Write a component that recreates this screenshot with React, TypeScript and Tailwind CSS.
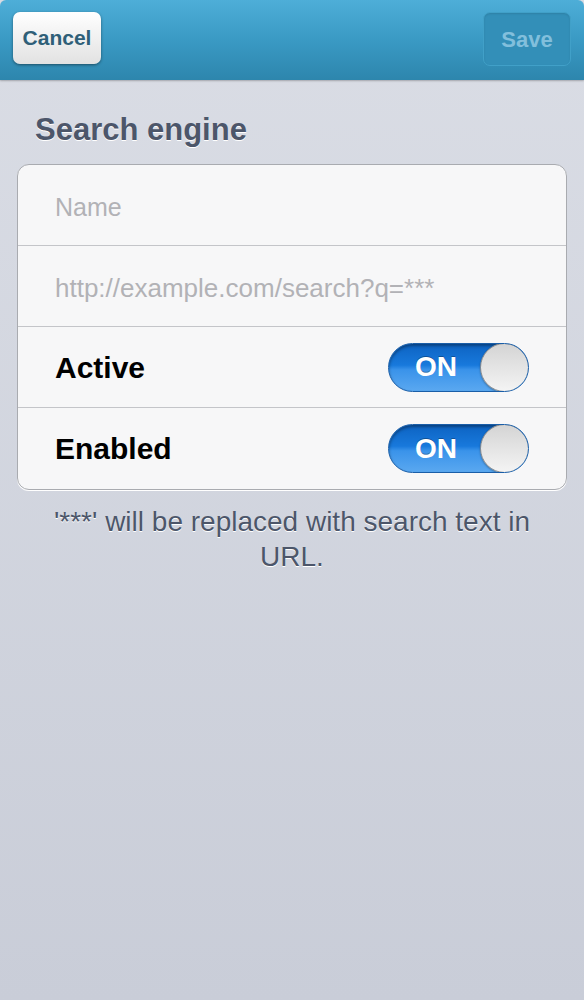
import { useState } from "react";

const font = { fontFamily: '"Liberation Sans", Arial, sans-serif' };

const Toggle = ({ on, onChange }: { on: boolean; onChange: () => void }) => (
  <button
    onClick={onChange}
    className="relative flex h-[49px] w-[141px] items-center overflow-hidden rounded-full border border-[#1a5ea8] bg-[linear-gradient(to_bottom,#0d63c2_0%,#1879dc_45%,#3a93ea_55%,#5aa8f0_100%)] shadow-[inset_0_2px_3px_rgba(0,0,0,0.35)]"
  >
    <span className="w-[94px] text-center text-[28px] font-bold text-white [text-shadow:0_-1px_0_rgba(0,0,0,0.3)]">
      {on ? "ON" : "OFF"}
    </span>
    <span className="absolute right-[-1px] top-[-1px] h-[49px] w-[49px] rounded-full border border-[#8a8a8a] bg-[linear-gradient(to_bottom,#d4d4d4,#f4f4f4)] shadow-[0_1px_2px_rgba(0,0,0,0.3)]" />
  </button>
);

export default function App() {
  const [active, setActive] = useState(true);
  const [enabled, setEnabled] = useState(true);

  return (
    <div
      style={font}
      className="flex min-h-[1000px] w-full flex-col bg-[linear-gradient(to_bottom,#dadde5,#c9cdd8)]"
    >
      {/* nav bar */}
      <div className="flex h-[80px] items-start justify-between rounded-t-[6px] bg-[linear-gradient(to_bottom,#4eaed8,#3a9ac4_50%,#2d86ad)] px-[13px] pt-[12px] shadow-[0_1px_2px_rgba(0,0,0,0.25)]">
        <button className="flex h-[52px] w-[88px] items-center justify-center rounded-[7px] bg-[linear-gradient(to_bottom,#ffffff,#e2e2e2)] text-[21px] font-bold text-[#2f5f78] shadow-[0_1px_3px_rgba(0,0,0,0.45)]">
          Cancel
        </button>
        <button className="flex h-[54px] w-[88px] items-center justify-center rounded-[7px] border border-[#41a0c8] bg-[#338fb8] text-[22px] font-bold text-[#82bfdc] shadow-[inset_0_1px_2px_rgba(0,0,0,0.1)]">
          Save
        </button>
      </div>

      <div className="px-[17px] pt-[30px]">
        <h2 className="pl-[18px] text-[31px] font-bold leading-[40px] text-[#4c566a] [text-shadow:0_1px_0_#ffffff]">
          Search engine
        </h2>

        <div className="mt-[14px] overflow-hidden rounded-[12px] border border-[#a9abb0] bg-[#f7f7f8] shadow-[0_1px_0_#ffffff]">
          <div className="flex h-[81px] items-center border-b border-[#c4c5c9] px-[37px] pt-[5px]">
            <input
              placeholder="Name"
              className="w-full bg-transparent text-[25px] text-[#333] outline-none placeholder:text-[#b2b2b6]"
            />
          </div>
          <div className="flex h-[81px] items-center border-b border-[#c4c5c9] px-[37px] pt-[5px]">
            <input
              placeholder="http://example.com/search?q=***"
              className="w-full bg-transparent text-[26px] text-[#333] outline-none placeholder:text-[#b2b2b6]"
            />
          </div>
          <div className="flex h-[81px] items-center justify-between border-b border-[#c4c5c9] pl-[37px] pr-[37px]">
            <span className="text-[30px] font-bold text-black">Active</span>
            <Toggle on={active} onChange={() => setActive(!active)} />
          </div>
          <div className="flex h-[81px] items-center justify-between pl-[37px] pr-[37px]">
            <span className="text-[30px] font-bold text-black">Enabled</span>
            <Toggle on={enabled} onChange={() => setEnabled(!enabled)} />
          </div>
        </div>

        <p className="mx-auto mt-[14px] w-[500px] text-center text-[28px] leading-[35px] text-[#4c566a] [text-shadow:0_1px_0_#ffffff]">
          '***' will be replaced with search text in URL.
        </p>
      </div>
    </div>
  );
}
